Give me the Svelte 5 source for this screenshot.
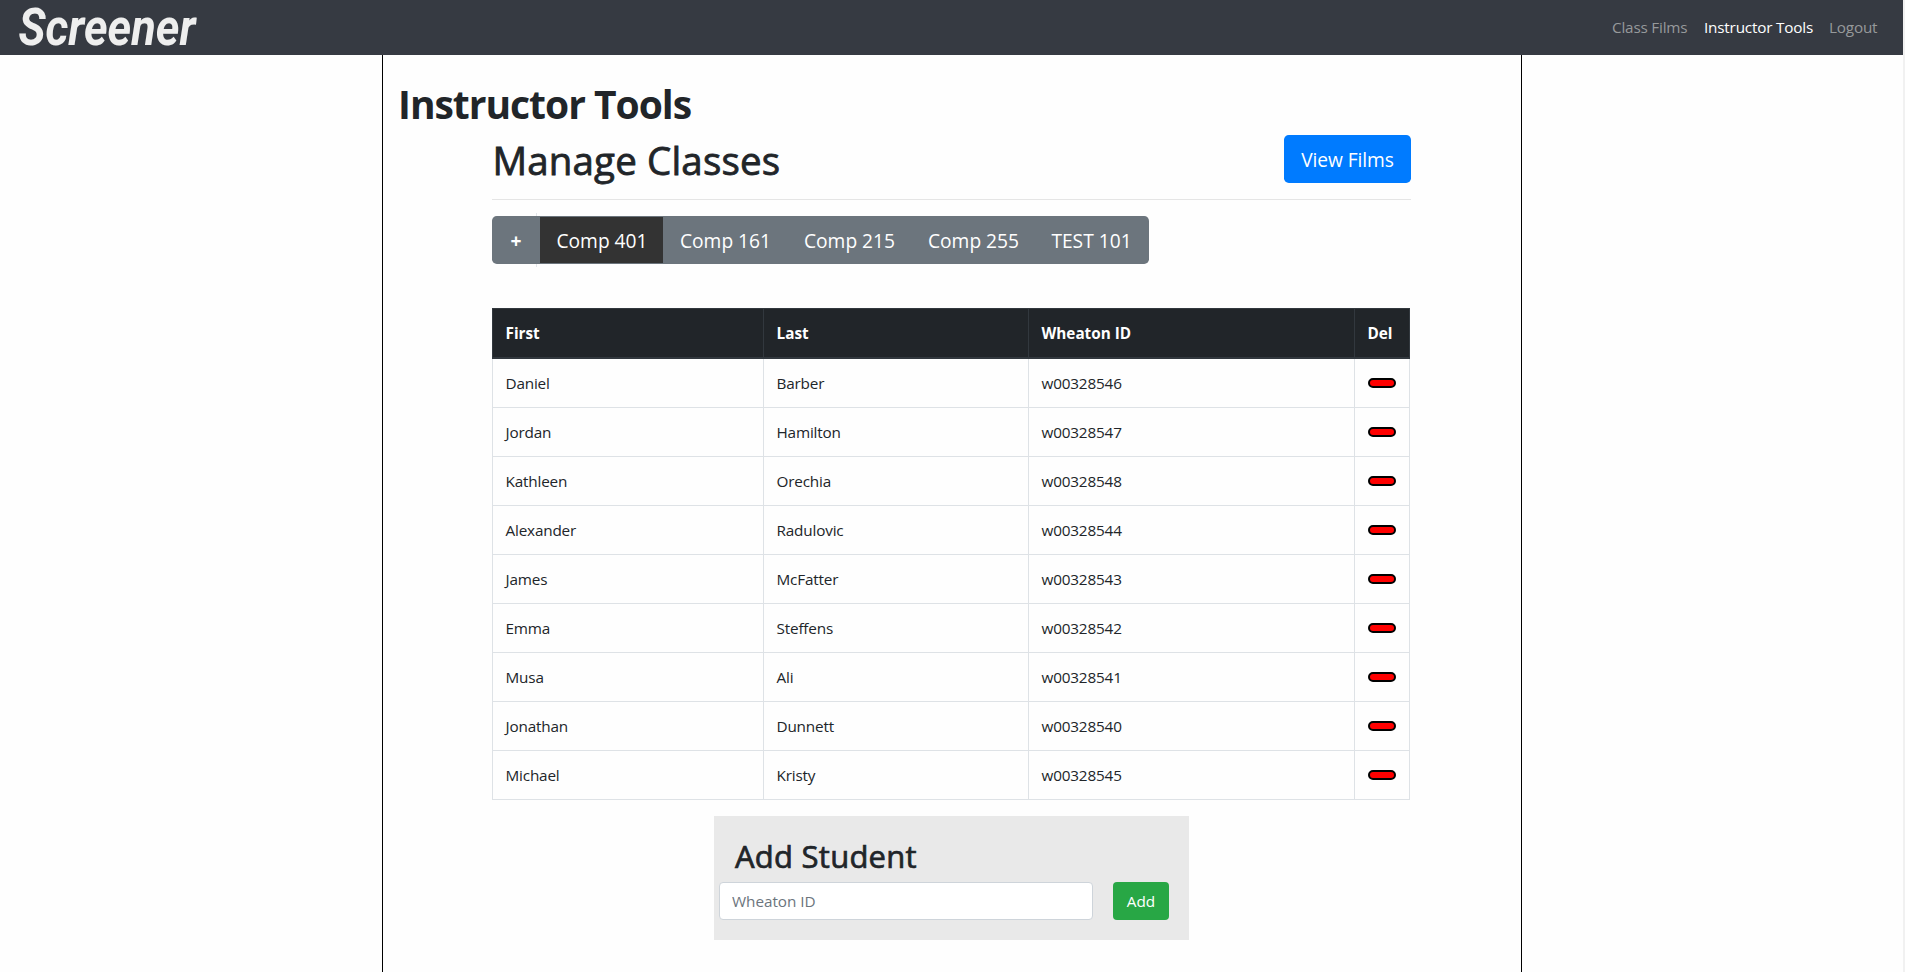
<script>
  const navLinks = [
    { label: 'Class Films', width: 76 },
    { label: 'Instructor Tools', width: 109, active: true },
    { label: 'Logout', width: 50 }
  ];
  const classes = ['Comp 401', 'Comp 161', 'Comp 215', 'Comp 255', 'TEST 101'];
  let selected = $state('Comp 401');
  let wheatonId = $state('');
  let students = $state([
    ['Daniel', 'Barber', 'w00328546'],
    ['Jordan', 'Hamilton', 'w00328547'],
    ['Kathleen', 'Orechia', 'w00328548'],
    ['Alexander', 'Radulovic', 'w00328544'],
    ['James', 'McFatter', 'w00328543'],
    ['Emma', 'Steffens', 'w00328542'],
    ['Musa', 'Ali', 'w00328541'],
    ['Jonathan', 'Dunnett', 'w00328540'],
    ['Michael', 'Kristy', 'w00328545']
  ]);
  function remove(id) {
    students = students.filter((s) => s[2] !== id);
  }
</script>

<div class="page">
  <nav class="navbar">
    <svg class="brand" width="240" height="55" viewBox="0 0 240 55" role="img" aria-label="Screener">
      <text x="2.5" y="45" textLength="177" lengthAdjust="spacingAndGlyphs">Screener</text>
    </svg>
    <div class="links">
      {#each navLinks as link}
        <a href="#top" class:active={link.active} style="width: {link.width}px">{link.label}</a>
      {/each}
    </div>
  </nav>

  <main class="container">
    <h1>Instructor Tools</h1>
    <section class="content">
      <header class="heading">
        <h2>Manage Classes</h2>
        <button class="view">View Films</button>
      </header>
      <hr />
      <div class="tabs">
        <button class="plus">+</button>
        {#each classes as name}
          <button class="tab" class:selected={selected === name} onclick={() => (selected = name)}>{name}</button>
        {/each}
      </div>

      <table>
        <colgroup>
          <col class="c1" /><col class="c2" /><col class="c3" /><col class="c4" />
        </colgroup>
        <thead>
          <tr><th>First</th><th>Last</th><th>Wheaton ID</th><th>Del</th></tr>
        </thead>
        <tbody>
          {#each students as [first, last, id] (id)}
            <tr>
              <td>{first}</td>
              <td>{last}</td>
              <td>{id}</td>
              <td><button class="del" aria-label="Delete" onclick={() => remove(id)}></button></td>
            </tr>
          {/each}
        </tbody>
      </table>

      <form class="add" onsubmit={(e) => e.preventDefault()}>
        <h3>Add Student</h3>
        <div class="row">
          <input placeholder="Wheaton ID" bind:value={wheatonId} />
          <button class="submit">Add</button>
        </div>
      </form>
    </section>
  </main>
</div>

<style>
  :global(body) {
    margin: 0;
    background: #f1f1f1;
    overflow: hidden;
  }
  * {
    box-sizing: border-box;
  }
  .page {
    width: 1903px;
    height: 972px;
    display: flex;
    flex-direction: column;
    background: #fefefe;
    color: #212529;
    font-family: 'Open Sans', 'Noto Sans', sans-serif;
    font-size: 15.3px;
    line-height: 24px;
  }
  h1, h2, h3 {
    margin: 0;
    white-space: nowrap;
  }
  button {
    font: inherit;
    color: #fff;
    border: 0;
    padding: 0;
    white-space: nowrap;
  }
  .navbar {
    width: 100%;
    height: 55px;
    flex: none;
    padding: 0 24px 0 16px;
    display: flex;
    justify-content: space-between;
    background: #363a42;
  }
  .brand {
    overflow: visible;
  }
  .brand text {
    font: italic 700 52px Roboto, sans-serif;
    fill: #eee;
  }
  .links {
    display: flex;
    gap: 16px;
    padding-top: 15px;
    letter-spacing: -0.2px;
  }
  .links a {
    color: #96999b;
    text-decoration: none;
    white-space: nowrap;
  }
  .links a.active {
    color: #fff;
  }
  .container {
    width: 1140px;
    flex: 1;
    margin-left: 382px;
    padding: 24px 16px 0;
    border: solid #000;
    border-width: 0 1px;
  }
  h1 {
    font-size: 39px;
    line-height: 50px;
    height: 56px;
    font-weight: 700;
    letter-spacing: -1.02px;
    text-indent: -1px;
  }
  .content {
    width: 919px;
    margin-left: 93px;
    isolation: isolate;
  }
  .heading {
    height: 64px;
    display: flex;
    justify-content: space-between;
  }
  h2 {
    font-size: 38.5px;
    line-height: 51px;
    font-weight: 400;
    -webkit-text-stroke: 0.8px #212529;
    letter-spacing: 0.15px;
    text-indent: 0.5px;
  }
  .view {
    width: 127px;
    height: 48px;
    padding-top: 2px;
    border-radius: 4.8px;
    background: #007bff;
    font-size: 19.2px;
    letter-spacing: -0.1px;
  }
  hr {
    height: 1px;
    margin: 0 0 16px;
    border: 0;
    background: #e5e5e5;
  }
  .tabs {
    position: relative;
    width: 657px;
    height: 48px;
    padding: 1px 1px 1px 0;
    display: flex;
    border-radius: 4.8px;
    background: #6c757d;
    font-size: 19.2px;
    letter-spacing: -0.35px;
  }
  /* divider that shows slightly above and below the bar */
  .tabs::before {
    content: '';
    position: absolute;
    z-index: -1;
    left: 44px;
    top: -3px;
    width: 1px;
    height: 54px;
    background: #e3e6ea;
  }
  .plus {
    width: 48px;
    padding-top: 2px;
    background: none;
    font-weight: 700;
  }
  .tab {
    width: 124px;
    padding: 2px 0 0 1px;
    background: none;
  }
  .tab:last-child {
    width: 112px;
  }
  .tab.selected {
    width: 123px;
    background: #333;
  }
  table {
    width: 918px;
    margin-top: 44px;
    table-layout: fixed;
    border-collapse: collapse;
  }
  .c1 { width: 271px; }
  .c2 { width: 265px; }
  .c3 { width: 326px; }
  .c4 { width: 55px; }
  th, td {
    height: 49px;
    padding: 0 0 0 12.5px;
    text-align: left;
    border: 1px solid #dee2e6;
    letter-spacing: -0.18px;
  }
  th {
    height: 49px;
    padding-top: 1px;
    color: #fff;
    background: #212529;
    border-color: #32383e;
    border-bottom-width: 2px;
    font-weight: 700;
    letter-spacing: 0;
  }
  tbody tr:first-child td {
    height: 50px;
  }
  .del {
    display: block;
    width: 28px;
    height: 10px;
    background: red;
    border: 2px solid #000;
    border-radius: 6px;
  }
  .add {
    width: 475px;
    height: 124px;
    margin: 16px 0 0 222px;
    padding: 20px 20px 20px 5px;
    background: #e9e9e9;
  }
  h3 {
    height: 46px;
    padding-left: 16px;
    font-size: 31px;
    line-height: 40px;
    font-weight: 400;
    -webkit-text-stroke: 0.7px #212529;
    letter-spacing: 0.25px;
  }
  .row {
    display: flex;
    justify-content: space-between;
  }
  input {
    width: 374px;
    height: 38px;
    padding: 0 12px;
    border: 1px solid #ced4da;
    border-radius: 4px;
    background: #fff;
    font: inherit;
    letter-spacing: -0.05px;
  }
  input::placeholder {
    color: #6c757d;
  }
  .submit {
    width: 56px;
    height: 38px;
    border-radius: 4px;
    background: #28a745;
  }
</style>
